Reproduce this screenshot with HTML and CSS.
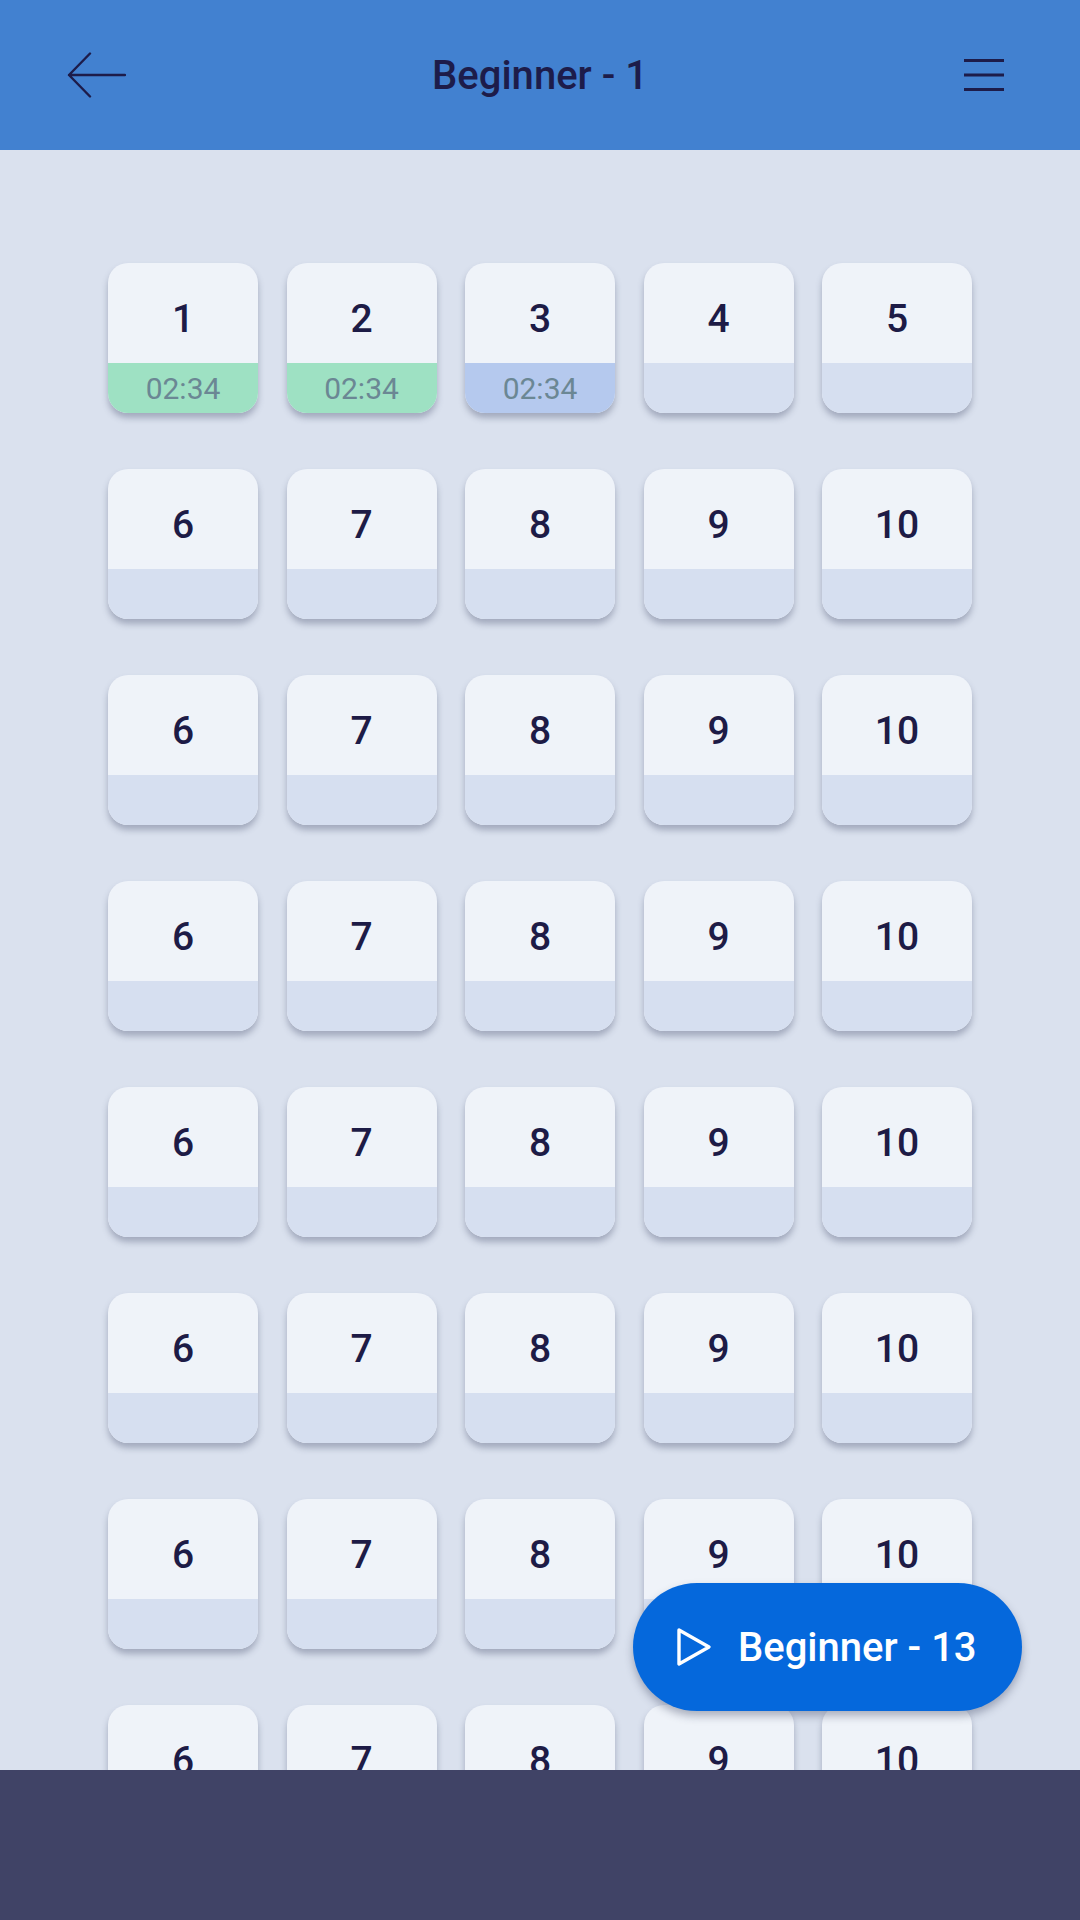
FILE: index.html
```html
<!DOCTYPE html>
<html>
<head>
<meta charset="utf-8">
<link rel="stylesheet" href="styles.css">
</head>
<body>
<div class="app">
  <header class="topbar">
    <button class="icon-btn back" aria-label="Back">
      <svg width="60" height="46" viewBox="0 0 60 46"><path d="M59 23H3M3 23L24 1.5M3 23L24 44.5" fill="none" stroke="#1d1c4a" stroke-width="2.4" stroke-linecap="round" stroke-linejoin="round"/></svg>
    </button>
    <h1 class="title">Beginner - 1</h1>
    <button class="icon-btn menu" aria-label="Menu">
      <svg width="42" height="34" viewBox="0 0 42 34"><path d="M1 2.5H41M1 17H41M1 31.5H41" fill="none" stroke="#1d1c4a" stroke-width="3"/></svg>
    </button>
  </header>
  <main class="content">
    <div class="grid">
      <div class="tile"><div class="num">1</div><div class="foot done">02:34</div></div>
      <div class="tile"><div class="num">2</div><div class="foot done">02:34</div></div>
      <div class="tile"><div class="num">3</div><div class="foot current">02:34</div></div>
      <div class="tile"><div class="num">4</div><div class="foot"></div></div>
      <div class="tile"><div class="num">5</div><div class="foot"></div></div>

      <div class="tile"><div class="num">6</div><div class="foot"></div></div>
      <div class="tile"><div class="num">7</div><div class="foot"></div></div>
      <div class="tile"><div class="num">8</div><div class="foot"></div></div>
      <div class="tile"><div class="num">9</div><div class="foot"></div></div>
      <div class="tile"><div class="num">10</div><div class="foot"></div></div>

      <div class="tile"><div class="num">6</div><div class="foot"></div></div>
      <div class="tile"><div class="num">7</div><div class="foot"></div></div>
      <div class="tile"><div class="num">8</div><div class="foot"></div></div>
      <div class="tile"><div class="num">9</div><div class="foot"></div></div>
      <div class="tile"><div class="num">10</div><div class="foot"></div></div>

      <div class="tile"><div class="num">6</div><div class="foot"></div></div>
      <div class="tile"><div class="num">7</div><div class="foot"></div></div>
      <div class="tile"><div class="num">8</div><div class="foot"></div></div>
      <div class="tile"><div class="num">9</div><div class="foot"></div></div>
      <div class="tile"><div class="num">10</div><div class="foot"></div></div>

      <div class="tile"><div class="num">6</div><div class="foot"></div></div>
      <div class="tile"><div class="num">7</div><div class="foot"></div></div>
      <div class="tile"><div class="num">8</div><div class="foot"></div></div>
      <div class="tile"><div class="num">9</div><div class="foot"></div></div>
      <div class="tile"><div class="num">10</div><div class="foot"></div></div>

      <div class="tile"><div class="num">6</div><div class="foot"></div></div>
      <div class="tile"><div class="num">7</div><div class="foot"></div></div>
      <div class="tile"><div class="num">8</div><div class="foot"></div></div>
      <div class="tile"><div class="num">9</div><div class="foot"></div></div>
      <div class="tile"><div class="num">10</div><div class="foot"></div></div>

      <div class="tile"><div class="num">6</div><div class="foot"></div></div>
      <div class="tile"><div class="num">7</div><div class="foot"></div></div>
      <div class="tile"><div class="num">8</div><div class="foot"></div></div>
      <div class="tile"><div class="num">9</div><div class="foot"></div></div>
      <div class="tile"><div class="num">10</div><div class="foot"></div></div>

      <div class="tile"><div class="num">6</div><div class="foot"></div></div>
      <div class="tile"><div class="num">7</div><div class="foot"></div></div>
      <div class="tile"><div class="num">8</div><div class="foot"></div></div>
      <div class="tile"><div class="num">9</div><div class="foot"></div></div>
      <div class="tile"><div class="num">10</div><div class="foot"></div></div>
    </div>
    <button class="fab">
      <svg width="36" height="40" viewBox="0 0 36 40"><path d="M3 3L33 20L3 37Z" fill="none" stroke="#fff" stroke-width="3.4" stroke-linejoin="round"/></svg>
      <span>Beginner - 13</span>
    </button>
  </main>
  <footer class="bottombar"></footer>
</div>
</body>
</html>
```

FILE: styles.css
```css
* { box-sizing: border-box; }
html, body { margin: 0; padding: 0; }
body {
  width: 1080px;
  height: 1920px;
  overflow: hidden;
  font-family: Roboto, "Noto Sans", sans-serif;
  background: #dae1ee;
}
.app {
  display: flex;
  flex-direction: column;
  height: 1920px;
}
.topbar {
  height: 150px;
  flex: none;
  background: #4281d0;
  display: flex;
  align-items: center;
  justify-content: space-between;
  padding: 0 75px 0 66px;
  position: relative;
}
.icon-btn {
  background: none;
  border: 0;
  padding: 0;
  display: flex;
}
.title {
  margin: 0;
  font-size: 40px;
  font-weight: 500;
  color: #1d1c4a;
  position: absolute;
  left: 0;
  right: 0;
  text-align: center;
  pointer-events: none;
}
.content {
  flex: 1;
  overflow: hidden;
  position: relative;
  background: #dae1ee;
}
.grid {
  display: grid;
  grid-template-columns: repeat(5, 150px);
  column-gap: 28.5px;
  row-gap: 56px;
  justify-content: center;
  padding-top: 113px;
}
.tile {
  width: 150px;
  height: 150px;
  border-radius: 20px;
  overflow: hidden;
  background: #eff3f9;
  box-shadow: 0 5px 6px rgba(60, 70, 100, 0.35);
  display: flex;
  flex-direction: column;
}
.num {
  height: 100px;
  display: flex;
  align-items: center;
  justify-content: center;
  padding-top: 11px;
  font-size: 39px;
  font-weight: 500;
  color: #1d1b46;
}
.foot {
  height: 50px;
  background: #d6dff0;
  display: flex;
  align-items: center;
  justify-content: center;
  font-size: 30px;
  color: #6b8794;
}
.foot.done { background: #9ee1c3; }
.foot.current { background: #b5c9ee; }
.fab {
  position: absolute;
  left: 633px;
  top: 1433px;
  width: 389px;
  height: 128px;
  border-radius: 64px;
  border: 0;
  background: #0568dc;
  box-shadow: 0 5px 8px rgba(40, 50, 80, 0.35);
  display: flex;
  align-items: center;
  padding: 0 0 0 43px;
  gap: 26px;
  color: #fff;
  font-family: Roboto, sans-serif;
  font-size: 40px;
  font-weight: 500;
}
.bottombar {
  height: 150px;
  flex: none;
  background: #404366;
}
```
